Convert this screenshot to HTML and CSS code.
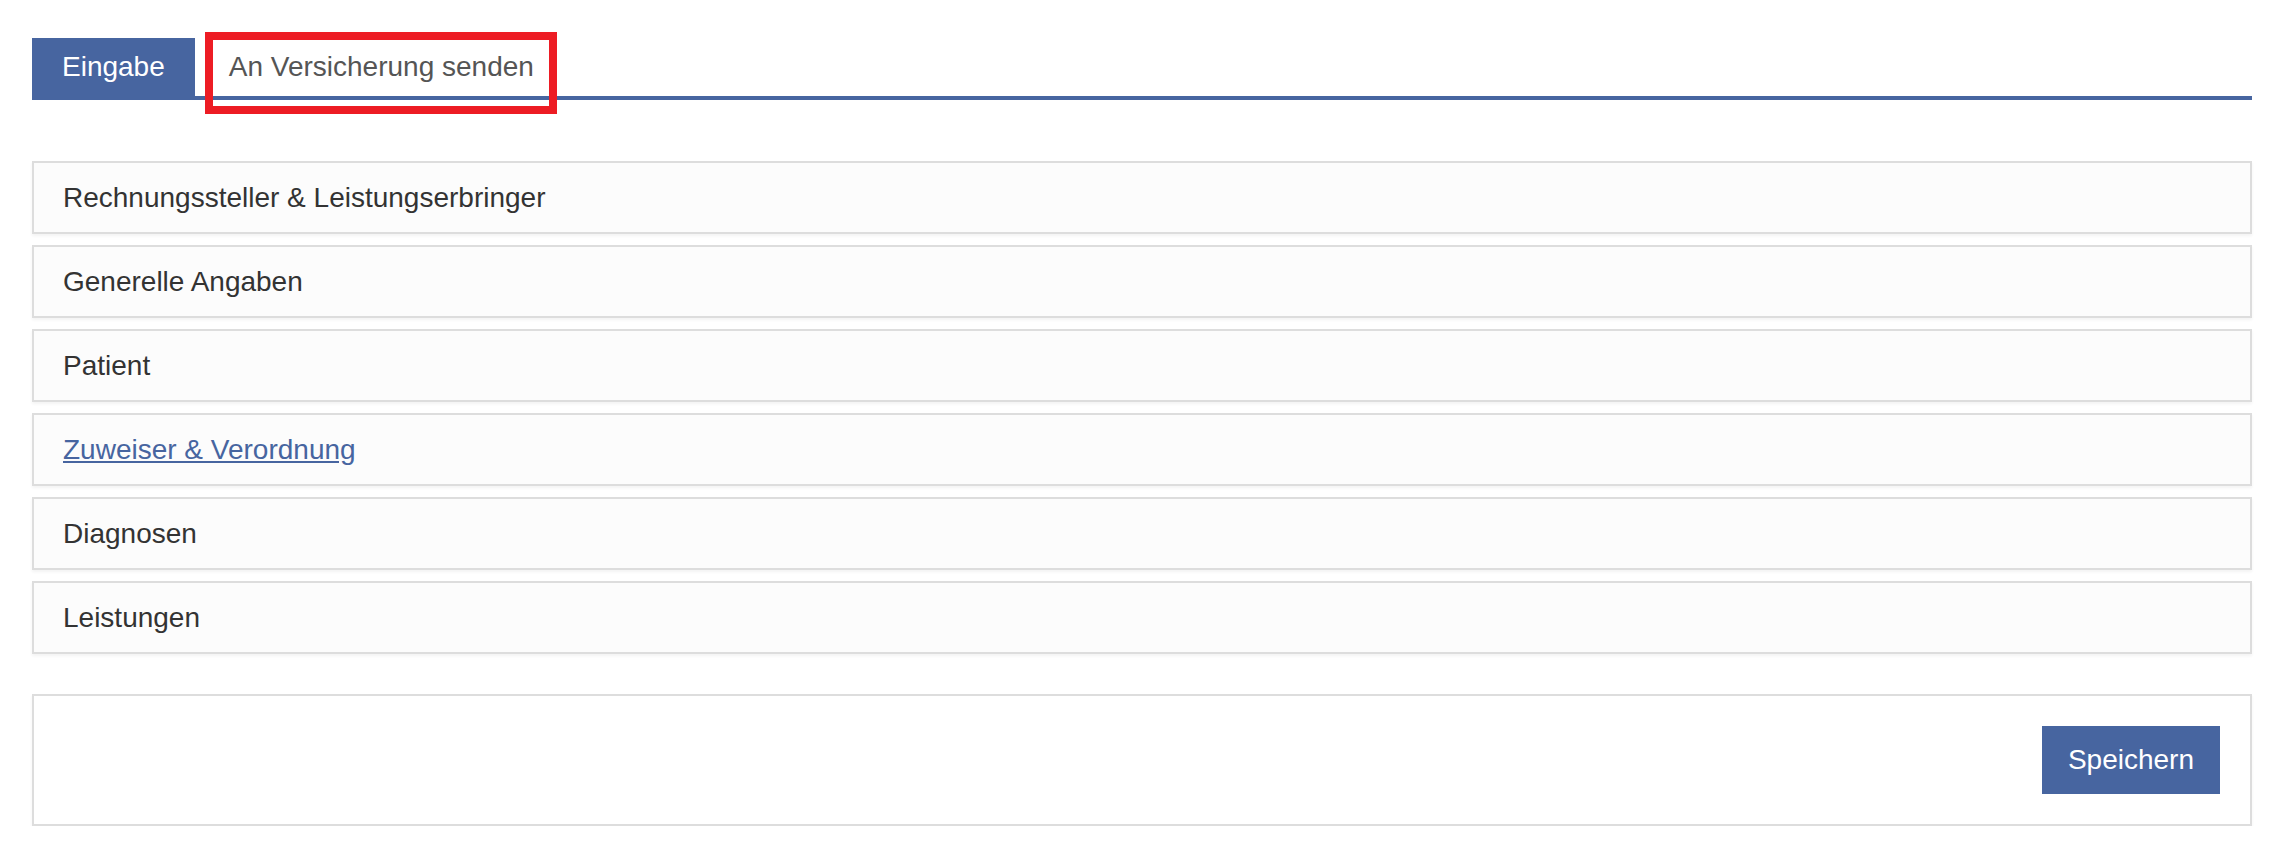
FILE: index.html
```html
<!DOCTYPE html>
<html lang="de">
<head>
<meta charset="utf-8">
<title>Rechnung</title>
<link rel="stylesheet" href="styles.css">
</head>
<body>
<div class="page">
  <nav class="tabs">
    <a class="tab tab-active" href="#">Eingabe</a>
    <a class="tab tab-marked" href="#">An Versicherung senden<span class="mark"></span></a>
  </nav>

  <div class="sections">
    <div class="section"><span class="section-title">Rechnungssteller &amp; Leistungserbringer</span></div>
    <div class="section"><span class="section-title">Generelle Angaben</span></div>
    <div class="section"><span class="section-title">Patient</span></div>
    <div class="section"><a class="section-title section-link" href="#">Zuweiser &amp; Verordnung</a></div>
    <div class="section"><span class="section-title">Diagnosen</span></div>
    <div class="section"><span class="section-title">Leistungen</span></div>
  </div>

  <div class="actions">
    <button class="btn-primary" type="button">Speichern</button>
  </div>
</div>
</body>
</html>
```

FILE: styles.css
```css
* { box-sizing: border-box; }

html, body {
  margin: 0;
  padding: 0;
  background: #ffffff;
}

body {
  font-family: "Liberation Sans", Arial, sans-serif;
  font-size: 28px;
  color: #333333;
}

.page {
  margin: 0 24px 0 32px;
  padding-top: 38px;
}

.tabs {
  display: flex;
  align-items: flex-end;
  gap: 4px;
  border-bottom: 4px solid #4765a0;
}

.tab {
  display: block;
  height: 58px;
  padding: 9px 30px;
  line-height: 40px;
  text-decoration: none;
  color: #555555;
  position: relative;
}

.tab-active {
  background: #4765a0;
  color: #ffffff;
}

.mark {
  position: absolute;
  left: 6px;
  right: 7px;
  top: -6px;
  bottom: -18px;
  border: 8px solid #ed1c24;
  pointer-events: none;
}

.sections {
  margin-top: 61px;
  display: flex;
  flex-direction: column;
  gap: 11px;
}

.section {
  background: #fcfcfc;
  border: 2px solid #dddddd;
  padding: 15px 29px;
  line-height: 39px;
  box-shadow: 0 2px 3px rgba(0, 0, 0, 0.05);
}

.section-title {
  color: #333333;
}

.section-link {
  color: #4765a0;
  text-decoration: underline;
}

.actions {
  margin-top: 40px;
  border: 2px solid #dddddd;
  background: #ffffff;
  padding: 30px;
  display: flex;
  justify-content: flex-end;
  box-shadow: 0 2px 3px rgba(0, 0, 0, 0.05);
}

.btn-primary {
  font-family: inherit;
  font-size: 28px;
  line-height: 40px;
  height: 68px;
  padding: 14px 26px;
  border: 0;
  border-radius: 0;
  background: #4765a0;
  color: #ffffff;
  cursor: pointer;
}
```
